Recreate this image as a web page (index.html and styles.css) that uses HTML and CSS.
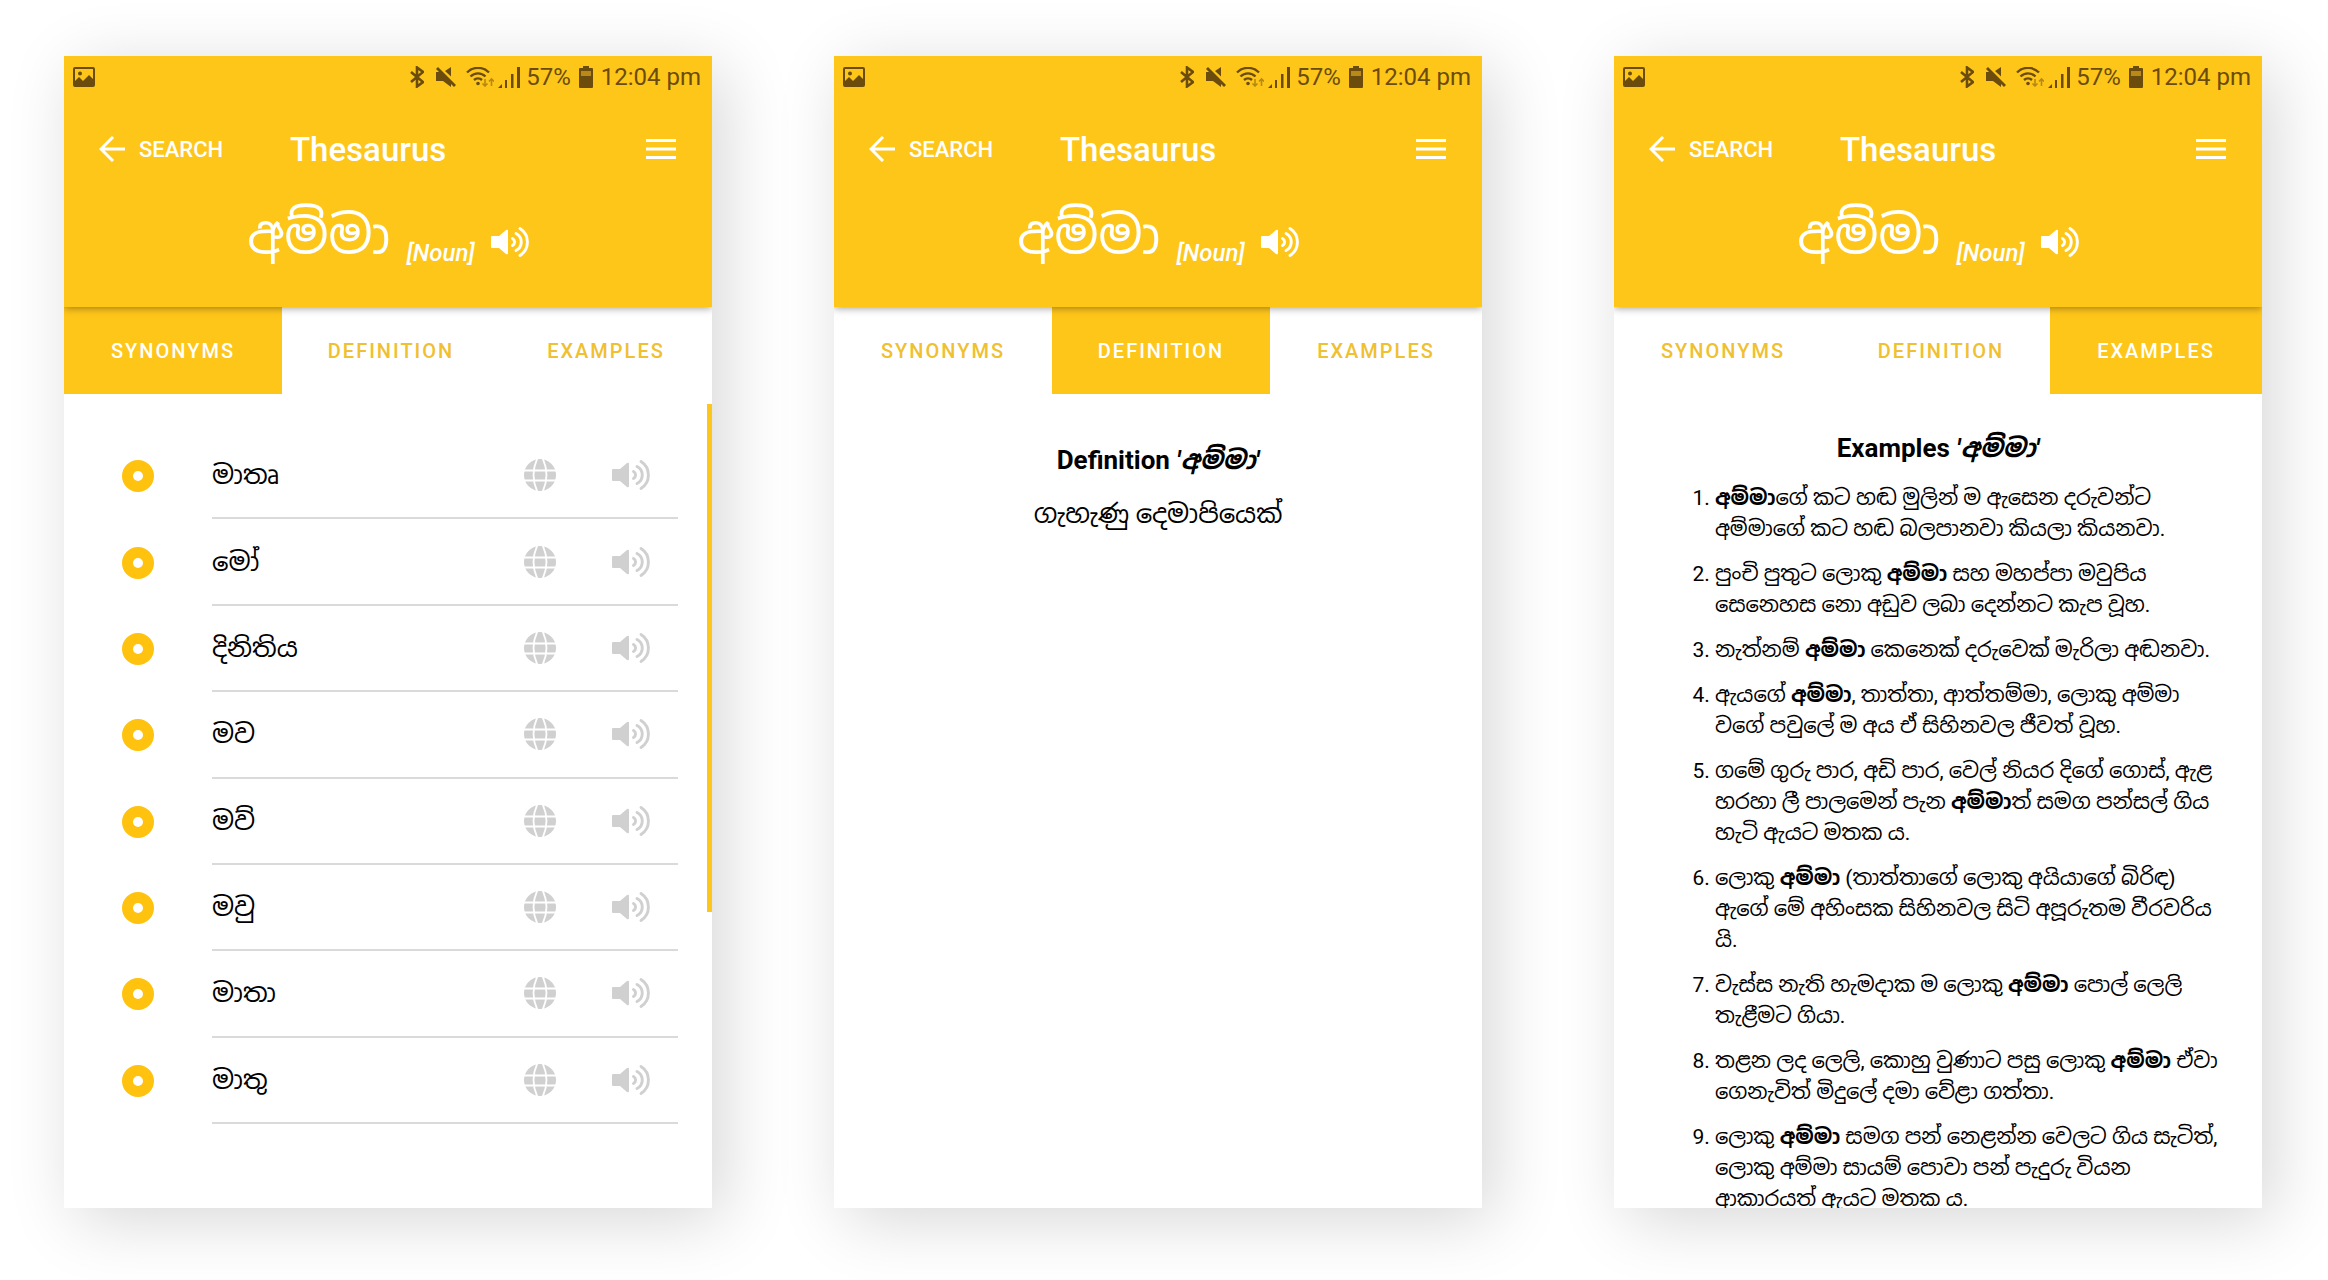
FILE: index.html
```html
<!DOCTYPE html>
<html lang="si">
<head>
<meta charset="utf-8">
<meta name="viewport" content="width=device-width, initial-scale=1">
<title>Thesaurus</title>
<link rel="stylesheet" href="styles.css">
</head>
<body>
<svg class="sprite" aria-hidden="true">
  <symbol id="i-photo" viewBox="0 0 22 20"><path fill-rule="evenodd" fill="currentColor" d="M2 0h18a2 2 0 0 1 2 2v16a2 2 0 0 1-2 2H2a2 2 0 0 1-2-2V2a2 2 0 0 1 2-2zM2 2v12l4-4 4 4 6-6 4 4V2zM7 4.500a2 2 0 1 1 0 4 2 2 0 0 1 0-4z"/></symbol>
  <symbol id="i-bluetooth" viewBox="0 0 14 22"><path fill="none" stroke="currentColor" stroke-width="2.600" d="M1 6l12 10-6 4.500V1.500L13 6 1 16"/></symbol>
  <symbol id="i-mute" viewBox="0 0 20 20"><path fill="currentColor" d="M0 5h4L15 15.500V20l-8-6H0zM9 4l6-4v9.500z"/><path stroke="currentColor" stroke-width="2.800" d="M1 1l18 18"/></symbol>
  <symbol id="i-wifi" viewBox="0 0 28 20"><g fill="none" stroke="currentColor" stroke-width="2.400"><path d="M1 5.500a15.500 15.500 0 0 1 22 0M4.500 9.500a10.500 10.500 0 0 1 15 0M8 13a6 6 0 0 1 8 0"/></g><circle cx="12" cy="16.500" r="1.800" fill="currentColor"/><path fill="none" stroke="currentColor" stroke-width="1.600" opacity=".5" d="M19 12v7M16.500 16.500L19 19l2.500-2.500M25.500 19v-7M23 14.500l2.500-2.500 2.500 2.500"/></symbol>
  <symbol id="i-signal" viewBox="0 0 22 22"><path fill="currentColor" d="M0 22l4-4v4zM7 14h2v8H7zM13 8h2.500v14H13zM19 1h3v21h-3z"/></symbol>
  <symbol id="i-battery" viewBox="0 0 14 22"><path fill="currentColor" d="M4 0h6v2h3a1 1 0 0 1 1 1v18a1 1 0 0 1-1 1H1a1 1 0 0 1-1-1V3a1 1 0 0 1 1-1h3z"/><path fill="#b98a17" d="M2 5h10v5H2z"/></symbol>
  <symbol id="i-back" viewBox="0 0 26 26"><path fill="none" stroke="currentColor" stroke-width="3" d="M14 1L2 13l12 12M2 13h24"/></symbol>
  <symbol id="i-menu" viewBox="0 0 30 20"><path stroke="currentColor" stroke-width="3" d="M0 1.500h30M0 10h30M0 18.500h30"/></symbol>
  <symbol id="i-speaker" viewBox="0 0 38 32"><path fill="currentColor" d="M1 10h7l7-6q2-1 2 1v22q0 2-2 1l-7-6H1q-1 0-1-1V11q0-1 1-1z"/><g fill="none" stroke="currentColor" stroke-width="2.900" stroke-linecap="round"><path d="M21.500 12.500a4 4 0 0 1 0 7"/><path d="M25 7.500a9.500 9.500 0 0 1 0 17"/><path d="M29 2.500a16 16 0 0 1 0 27"/></g></symbol>
  <symbol id="i-globe" viewBox="0 0 32 32"><circle cx="16" cy="16" r="16" fill="currentColor"/><g fill="none" stroke="#fff" stroke-width="1.800"><path d="M0 11.500h32M0 21.500h32M13.500-1q-8 17 0 34M18.500-1q8 17 0 34"/></g></symbol>
</svg>

<main class="showcase">
  <section class="phone">
    <header class="top">
      <div class="status">
        <svg class="ic-photo"><use href="#i-photo"/></svg>
        <svg class="ic-bluetooth"><use href="#i-bluetooth"/></svg>
        <svg class="ic-mute"><use href="#i-mute"/></svg>
        <svg class="ic-wifi"><use href="#i-wifi"/></svg>
        <svg class="ic-signal"><use href="#i-signal"/></svg>
        <span>57%</span>
        <svg class="ic-battery"><use href="#i-battery"/></svg>
        <span>12:04 pm</span>
      </div>
      <div class="appbar">
        <a class="back" href="#search"><svg><use href="#i-back"/></svg>SEARCH</a>
        <h1>Thesaurus</h1>
        <button class="menu" aria-label="Menu"><svg><use href="#i-menu"/></svg></button>
      </div>
      <div class="headword">
        <strong>අම්මා</strong><em>[Noun]</em>
        <button class="say" aria-label="Listen"><svg><use href="#i-speaker"/></svg></button>
      </div>
    </header>
    <nav class="tabs" role="tablist">
      <button role="tab" aria-selected="true">SYNONYMS</button>
      <button role="tab" aria-selected="false">DEFINITION</button>
      <button role="tab" aria-selected="false">EXAMPLES</button>
    </nav>
    <div class="panel synonyms">
      <ul>
        <li><i class="dot"></i><div class="entry"><span>මාතෘ</span><button class="web" aria-label="Web"><svg><use href="#i-globe"/></svg></button><button class="say" aria-label="Listen"><svg><use href="#i-speaker"/></svg></button></div></li>
        <li><i class="dot"></i><div class="entry"><span>මෝ</span><button class="web" aria-label="Web"><svg><use href="#i-globe"/></svg></button><button class="say" aria-label="Listen"><svg><use href="#i-speaker"/></svg></button></div></li>
        <li><i class="dot"></i><div class="entry"><span>දිනිතිය</span><button class="web" aria-label="Web"><svg><use href="#i-globe"/></svg></button><button class="say" aria-label="Listen"><svg><use href="#i-speaker"/></svg></button></div></li>
        <li><i class="dot"></i><div class="entry"><span>මව</span><button class="web" aria-label="Web"><svg><use href="#i-globe"/></svg></button><button class="say" aria-label="Listen"><svg><use href="#i-speaker"/></svg></button></div></li>
        <li><i class="dot"></i><div class="entry"><span>මව්</span><button class="web" aria-label="Web"><svg><use href="#i-globe"/></svg></button><button class="say" aria-label="Listen"><svg><use href="#i-speaker"/></svg></button></div></li>
        <li><i class="dot"></i><div class="entry"><span>මවු</span><button class="web" aria-label="Web"><svg><use href="#i-globe"/></svg></button><button class="say" aria-label="Listen"><svg><use href="#i-speaker"/></svg></button></div></li>
        <li><i class="dot"></i><div class="entry"><span>මාතා</span><button class="web" aria-label="Web"><svg><use href="#i-globe"/></svg></button><button class="say" aria-label="Listen"><svg><use href="#i-speaker"/></svg></button></div></li>
        <li><i class="dot"></i><div class="entry"><span>මාතු</span><button class="web" aria-label="Web"><svg><use href="#i-globe"/></svg></button><button class="say" aria-label="Listen"><svg><use href="#i-speaker"/></svg></button></div></li>
      </ul>
      <div class="scrollbar"></div>
    </div>
  </section>

  <section class="phone">
    <header class="top">
      <div class="status">
        <svg class="ic-photo"><use href="#i-photo"/></svg>
        <svg class="ic-bluetooth"><use href="#i-bluetooth"/></svg>
        <svg class="ic-mute"><use href="#i-mute"/></svg>
        <svg class="ic-wifi"><use href="#i-wifi"/></svg>
        <svg class="ic-signal"><use href="#i-signal"/></svg>
        <span>57%</span>
        <svg class="ic-battery"><use href="#i-battery"/></svg>
        <span>12:04 pm</span>
      </div>
      <div class="appbar">
        <a class="back" href="#search"><svg><use href="#i-back"/></svg>SEARCH</a>
        <h1>Thesaurus</h1>
        <button class="menu" aria-label="Menu"><svg><use href="#i-menu"/></svg></button>
      </div>
      <div class="headword">
        <strong>අම්මා</strong><em>[Noun]</em>
        <button class="say" aria-label="Listen"><svg><use href="#i-speaker"/></svg></button>
      </div>
    </header>
    <nav class="tabs" role="tablist">
      <button role="tab" aria-selected="false">SYNONYMS</button>
      <button role="tab" aria-selected="true">DEFINITION</button>
      <button role="tab" aria-selected="false">EXAMPLES</button>
    </nav>
    <div class="panel definition">
      <h2>Definition <em>'අම්මා'</em></h2>
      <p>ගැහැණු දෙමාපියෙක්</p>
    </div>
  </section>

  <section class="phone">
    <header class="top">
      <div class="status">
        <svg class="ic-photo"><use href="#i-photo"/></svg>
        <svg class="ic-bluetooth"><use href="#i-bluetooth"/></svg>
        <svg class="ic-mute"><use href="#i-mute"/></svg>
        <svg class="ic-wifi"><use href="#i-wifi"/></svg>
        <svg class="ic-signal"><use href="#i-signal"/></svg>
        <span>57%</span>
        <svg class="ic-battery"><use href="#i-battery"/></svg>
        <span>12:04 pm</span>
      </div>
      <div class="appbar">
        <a class="back" href="#search"><svg><use href="#i-back"/></svg>SEARCH</a>
        <h1>Thesaurus</h1>
        <button class="menu" aria-label="Menu"><svg><use href="#i-menu"/></svg></button>
      </div>
      <div class="headword">
        <strong>අම්මා</strong><em>[Noun]</em>
        <button class="say" aria-label="Listen"><svg><use href="#i-speaker"/></svg></button>
      </div>
    </header>
    <nav class="tabs" role="tablist">
      <button role="tab" aria-selected="false">SYNONYMS</button>
      <button role="tab" aria-selected="false">DEFINITION</button>
      <button role="tab" aria-selected="true">EXAMPLES</button>
    </nav>
    <div class="panel examples">
      <h2>Examples <em>'අම්මා'</em></h2>
      <ol>
        <li><b>අම්මා</b>ගේ කට හඬ මුලින් ම ඇසෙන දරුවන්ට<br>අම්මාගේ කට හඬ බලපානවා කියලා කියනවා.</li>
        <li>පුංචි පුතුට ලොකු <b>අම්මා</b> සහ මහප්පා මවුපිය<br>සෙනෙහස නො අඩුව ලබා දෙන්නට කැප වූහ.</li>
        <li>නැත්නම් <b>අම්මා</b> කෙනෙක් දරුවෙක් මැරිලා අඬනවා.</li>
        <li>ඇයගේ <b>අම්මා</b>, තාත්තා, ආත්තම්මා, ලොකු අම්මා<br>වගේ පවුලේ ම අය ඒ සිහිනවල ජීවත් වූහ.</li>
        <li>ගමේ ගුරු පාර, අඩි පාර, වෙල් නියර දිගේ ගොස්, ඇළ<br>හරහා ලී පාලමෙන් පැන <b>අම්මා</b>ත් සමග පන්සල් ගිය<br>හැටි ඇයට මතක ය.</li>
        <li>ලොකු <b>අම්මා</b> (තාත්තාගේ ලොකු අයියාගේ බිරිඳ)<br>ඇගේ මේ අහිංසක සිහිනවල සිටි අපූරුතම වීරවරිය<br>යි.</li>
        <li>වැස්ස නැති හැමදාක ම ලොකු <b>අම්මා</b> පොල් ලෙලි<br>තැළීමට ගියා.</li>
        <li>තළන ලද ලෙලි, කොහු වුණාට පසු ලොකු <b>අම්මා</b> ඒවා<br>ගෙනැවිත් මිදුලේ දමා වේළා ගත්තා.</li>
        <li>ලොකු <b>අම්මා</b> සමග පන් නෙළන්න වෙලට ගිය සැටිත්,<br>ලොකු අම්මා සායම් පොවා පන් පැදුරු වියන<br>ආකාරයත් ඇයට මතක ය.</li>
      </ol>
    </div>
  </section>
</main>
</body>
</html>
```
FILE: styles.css
```css
:root {
  --amber: #ffc61a;
  --status: #6b4c0c;
}

* { box-sizing: border-box; }

body {
  margin: 0;
  background: #fff;
  color: #000;
  font-family: Roboto, "Noto Sans Sinhala", "Noto Sans", sans-serif;
}

button {
  padding: 0;
  border: 0;
  background: none;
  color: inherit;
  font: inherit;
  cursor: pointer;
}

svg { display: block; flex: none; }

.sprite { position: absolute; width: 0; height: 0; }

.showcase {
  display: flex;
  gap: 122px;
  height: 100vh;
  min-height: 1000px;
  padding: 56px 66px 72px 64px;
  overflow: hidden;
}

.phone {
  display: flex;
  flex: 1 1 0;
  flex-direction: column;
  min-width: 0;
  overflow: hidden;
  background: #fff;
  box-shadow: 12px 12px 64px rgba(0, 0, 0, .16);
}

.phone:last-child { margin-left: 10px; }

/* Header */
.top {
  position: relative;
  flex: none;
  background: var(--amber);
  color: #fff;
  box-shadow: 0 1px 8px rgba(0, 0, 0, .4);
}

.status {
  display: flex;
  align-items: center;
  gap: 8px;
  height: 42px;
  padding: 0 11px 0 9px;
  color: var(--status);
  font-size: 24px;
  line-height: 42px;
}

.ic-photo { width: 22px; height: 20px; margin-right: auto; }
.ic-bluetooth { width: 14px; height: 22px; margin-right: 4px; }
.ic-mute { width: 20px; height: 20px; margin-right: 2px; }
.ic-wifi { width: 28px; height: 20px; margin-right: -4px; }
.ic-signal { width: 22px; height: 22px; margin-right: -2px; }
.ic-battery { width: 14px; height: 22px; }

.appbar {
  display: flex;
  align-items: center;
  height: 102px;
  padding: 0 36px 0 35px;
}

.back {
  display: flex;
  align-items: center;
  gap: 14px;
  width: 191px;
  color: inherit;
  font-size: 22px;
  font-weight: 500;
  text-decoration: none;
}

.back svg { width: 26px; height: 26px; }

h1 {
  margin: 0;
  font-size: 33px;
  font-weight: 500;
}

.menu { margin-left: auto; }
.menu svg { width: 30px; height: 20px; }

.headword {
  display: flex;
  align-items: center;
  justify-content: center;
  gap: 16px;
  height: 107px;
  padding-bottom: 36px;
}

.headword strong {
  font-size: 52px;
  font-weight: 400;
  line-height: 70px;
}

.headword em {
  padding-top: 34px;
  font-size: 24px;
  font-weight: 500;
  line-height: 28px;
}

.headword .say { padding-top: 12px; }

.say svg { width: 38px; height: 32px; }

/* Tabs */
.tabs {
  display: grid;
  flex: none;
  grid-template-columns: 218fr 218fr 212fr;
  height: 87px;
  color: #efc02f;
}

.tabs button {
  font-size: 20px;
  font-weight: 500;
  letter-spacing: 2px;
}

.tabs [aria-selected="true"] {
  background: var(--amber);
  color: #fff;
}

/* Panels */
.panel {
  position: relative;
  flex: 1;
  min-height: 0;
}

.synonyms {
  display: flex;
  padding: 39px 34px 84px 58px;
}

.synonyms ul {
  display: grid;
  flex: 1;
  grid-auto-rows: 1fr;
  margin: 0;
  padding: 0;
  list-style: none;
}

.synonyms li {
  display: flex;
  align-items: center;
  gap: 58px;
}

.dot {
  width: 32px;
  height: 32px;
  border: 11px solid #ffc20e;
  border-radius: 50%;
}

.entry {
  display: flex;
  flex: 1;
  align-items: center;
  align-self: stretch;
  padding-right: 28px;
  border-bottom: 2px solid #dadada;
  color: #d0d0d0;
}

.entry span {
  margin-right: auto;
  color: #000;
  font-size: 26px;
  line-height: 40px;
}

.entry .web { margin-right: 56px; }
.web svg { width: 32px; height: 32px; }

.scrollbar {
  position: absolute;
  top: 10px;
  right: 0;
  width: 5px;
  height: 508px;
  background: var(--amber);
}

h2 {
  margin: 0;
  font-size: 26px;
  font-weight: 700;
  line-height: 36px;
  text-align: center;
}

.definition { padding-top: 48px; }

.definition p {
  margin: 18px 0 0;
  font-size: 26px;
  line-height: 36px;
  text-align: center;
}

.examples {
  padding: 36px 24px 0 101px;
  overflow: hidden;
}

.examples h2 { margin-right: 77px; }

.examples ol {
  display: grid;
  gap: 14px;
  margin: 17px 0 0;
  padding: 0;
  font-size: 21px;
  line-height: 31px;
  white-space: nowrap;
}

@media (max-width: 1800px) {
  .showcase {
    flex-direction: column;
    align-items: center;
    height: auto;
    overflow: visible;
  }

  .phone {
    flex: none;
    width: 100%;
    max-width: 648px;
    height: 1151px;
  }

  .phone:last-child { margin-left: 0; }
}
```
